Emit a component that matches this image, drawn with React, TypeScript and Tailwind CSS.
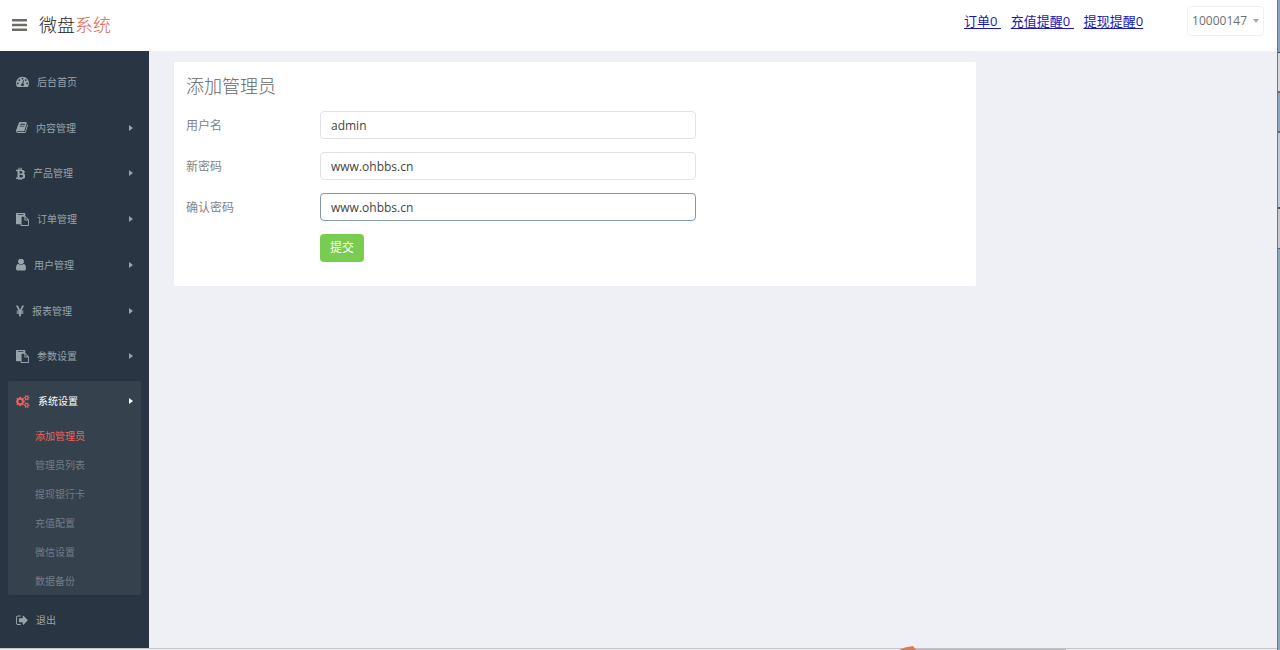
import { useState } from "react";

type Glyph = { d: string; box: string; className: string };

const glyphs: Record<string, Glyph> = {
  dashboard: {
    box: "0 0 1792 1792",
    className: "h-[13px] w-[13px]",
    d: "M384 1152q0-53-37.5-90.5t-90.5-37.5-90.5 37.5-37.5 90.5 37.5 90.5 90.5 37.5 90.5-37.5 37.5-90.5zm192-448q0-53-37.5-90.5t-90.5-37.5-90.5 37.5-37.5 90.5 37.5 90.5 90.5 37.5 90.5-37.5 37.5-90.5zm428 481l101-382q6-26-7.5-48.5t-38.5-29.5-48 6.5-30 39.5l-101 382q-60 5-107 43.5t-63 98.5q-20 77 20 146t117 89 146-20 89-117q16-60-6-117t-72-91zm660-33q0-53-37.5-90.5t-90.5-37.5-90.5 37.5-37.5 90.5 37.5 90.5 90.5 37.5 90.5-37.5 37.5-90.5zm-640-640q0-53-37.5-90.5t-90.5-37.5-90.5 37.5-37.5 90.5 37.5 90.5 90.5 37.5 90.5-37.5 37.5-90.5zm448 192q0-53-37.5-90.5t-90.5-37.5-90.5 37.5-37.5 90.5 37.5 90.5 90.5 37.5 90.5-37.5 37.5-90.5zm320 448q0 261-141 483-19 29-54 29h-1402q-35 0-54-29-141-221-141-483 0-182 71-348t191-286 286-191 348-71 348 71 286 191 191 286 71 348z",
  },
  book: {
    box: "60 0 1680 1792",
    className: "h-[13px] w-3",
    d: "M1703 478q40 57 18 129l-275 906q-19 64-76.5 107.5t-122.5 43.5h-923q-77 0-148.5-53.5t-99.5-131.5q-24-67-2-127 0-4 3-27t4-37q1-8-3-21.5t-3-19.5q2-11 8-21t16.5-23.5 16.5-23.5q23-38 45-91.5t30-91.5q3-10 .5-30t-.5-28q3-11 17-28t17-23q21-36 42-92t25-90q1-9-2.5-32t.5-28q4-13 22-30.5t22-22.5q19-26 42.5-84.5t27.5-96.5q1-8-3-25.5t-2-26.5q2-8 9-18t18-23 17-21q8-12 16.5-30.5t15-35 16-36 19.5-32 26.5-23.5 36-11.5 47.5 5.5l-1 3q38-9 51-9h761q74 0 114 56t18 130l-274 906q-36 119-71.5 153.5t-128.5 34.5h-869q-27 0-38 15-11 16-1 43 24 70 144 70h923q29 0 56-15.5t35-41.5l300-987q7-22 5-57 38 15 59 43zm-1064 2q-4 13 2 22.5t20 9.5h608q13 0 25.5-9.5t16.5-22.5l21-64q4-13-2-22.5t-20-9.5h-608q-13 0-25.5 9.5t-16.5 22.5zm-83 256q-4 13 2 22.5t20 9.5h608q13 0 25.5-9.5t16.5-22.5l21-64q4-13-2-22.5t-20-9.5h-608q-13 0-25.5 9.5t-16.5 22.5z",
  },
  bitcoin: {
    box: "120 64 1130 1600",
    className: "h-[13px] w-[9px]",
    d: "M1217 651q18 182-131 258 117 28 175 103t45 214q-7 71-32.5 125t-64.5 89-97 58.5-121.5 34.5-145.5 15v255h-154v-251q-80 0-122-1v252h-154v-255q-18 0-54-.5t-55-.5h-200l31-183h111q50 0 58-51v-402h16q-6-1-16-1v-287q-13-68-89-68h-111v-164l212 1q64 0 97-1v-252h154v247q82-2 122-2v-245h154v252q79 7 140 22.5t113 45 82.5 78 36.5 114.5zm-215 545q0-36-15-64t-37-46-57.5-30.5-65.5-18.5-74-9-69-3-64.5 1-47.5 1v338q8 0 37 .5t48 .5 53-1.5 58.5-4 57-8.5 55.5-14 47.5-21 39.5-30 24.5-40 9.5-51zm-71-476q0-33-12.5-58.5t-30.5-42-48-28-55-16.5-61.5-8-58-2.5-54 1-39.5.5v307q5 0 34.5.5t46.5 0 50-2 55-5.5 51.5-11 48.5-18.5 37-27 27-38.5 9-51z",
  },
  paste: {
    box: "0 0 1792 1792",
    className: "h-[13px] w-[13px]",
    d: "M768 1664h896v-640h-416q-40 0-68-28t-28-68v-416h-384v1152zm256-1440v-64q0-13-9.5-22.5t-22.5-9.5h-704q-13 0-22.5 9.5t-9.5 22.5v64q0 13 9.5 22.5t22.5 9.5h704q13 0 22.5-9.5t9.5-22.5zm256 672h299l-299-299v299zm512 128v672q0 40-28 68t-68 28h-960q-40 0-68-28t-28-68v-160h-544q-40 0-68-28t-28-68v-1344q0-40 28-68t68-28h1088q40 0 68 28t28 68v328q21 13 36 28l408 408q28 28 48 76t20 88z",
  },
  user: {
    box: "256 192 1280 1536",
    className: "h-3 w-2.5",
    d: "M1536 1399q0 109-62.5 187t-150.5 78h-854q-88 0-150.5-78t-62.5-187q0-85 8.5-160.5t31.5-152 58.5-131 94-89 134.5-34.5q131 128 313 128t313-128q76 0 134.5 34.5t94 89 58.5 131 31.5 152 8.5 160.5zm-256-887q0 159-112.5 271.5t-271.5 112.5-271.5-112.5-112.5-271.5 112.5-271.5 271.5-112.5 271.5 112.5 112.5 271.5z",
  },
  yen: {
    box: "376 64 1040 1536",
    className: "h-3 w-2",
    d: "M985.500 1536h-172q-13 0-22.500-9t-9.500-23v-330h-288q-13 0-22.500-9t-9.500-23v-103q0-13 9.500-22.500t22.500-9.500h288v-85h-288q-13 0-22.500-9t-9.500-23v-104q0-13 9.500-22.500t22.500-9.500h214l-321-578q-8-16 0-32 10-16 28-16h194q19 0 29 18l215 425q19 38 56 125 10-24 30.500-68t27.500-61l191-420q8-19 29-19h191q17 0 27 16 9 14 1 31l-313 579h215q13 0 22.500 9.500t9.500 22.500v104q0 14-9.500 23t-22.500 9h-290v85h290q13 0 22.500 9.500t9.500 22.500v103q0 14-9.500 23t-22.500 9h-290v330q0 13-9.500 22.500t-22.500 9.500z",
  },
  cogs: {
    box: "0 0 1920 1792",
    className: "h-[13px] w-3.5",
    d: "M832 896q0-106-75-181t-181-75-181 75-75 181 75 181 181 75 181-75 75-181zm768 512q0-52-38-90t-90-38-90 38-38 90q0 53 37.5 90.5t90.5 37.5 90.5-37.5 37.5-90.5zm0-1024q0-52-38-90t-90-38-90 38-38 90q0 53 37.5 90.5t90.5 37.5 90.5-37.5 37.5-90.5zm-384 421v185q0 10-7 19.5t-16 10.5l-155 24q-11 35-32 76 34 48 90 115 7 11 7 20 0 12-7 19-23 30-82.5 89.5t-78.5 59.5q-11 0-21-7l-115-90q-37 19-77 31-11 108-23 155-7 24-30 24h-186q-11 0-20-7.5t-10-17.5l-23-153q-34-10-75-31l-118 89q-7 7-20 7-11 0-21-8-144-133-144-160 0-9 7-19 10-14 41-53t47-61q-23-44-35-82l-152-24q-10-1-17-9.5t-7-19.5v-185q0-10 7-19.5t16-10.5l155-24q11-35 32-76-34-48-90-115-7-11-7-20 0-12 7-20 22-30 82-89t79-59q11 0 21 7l115 90q34-18 77-32 11-108 23-154 7-24 30-24h186q11 0 20 7.5t10 17.5l23 153q34 10 75 31l118-89q8-7 20-7 11 0 21 8 144 133 144 160 0 8-7 19-12 16-42 54t-45 60q23 48 34 82l152 23q10 2 17 10.5t7 19.5zm640 533v140q0 16-149 31-12 27-30 52 51 113 51 138 0 4-4 7-122 71-124 71-8 0-46-47t-52-68q-20 2-30 2t-30-2q-14 21-52 68t-46 47q-2 0-124-71-4-3-4-7 0-25 51-138-18-25-30-52-149-15-149-31v-140q0-16 149-31 13-29 30-52-51-113-51-138 0-4 4-7 4-2 35-20t59-34 30-16q8 0 46 46.5t52 67.5q20-2 30-2t30 2q51-71 92-112l6-2q4 0 124 70 4 3 4 7 0 25-51 138 17 23 30 52 149 15 149 31zm0-1024v140q0 16-149 31-12 27-30 52 51 113 51 138 0 4-4 7-122 71-124 71-8 0-46-47t-52-68q-20 2-30 2t-30-2q-14 21-52 68t-46 47q-2 0-124-71-4-3-4-7 0-25 51-138-18-25-30-52-149-15-149-31v-140q0-16 149-31 13-29 30-52-51-113-51-138 0-4 4-7 4-2 35-20t59-34 30-16q8 0 46 46.5t52 67.5q20-2 30-2t30 2q51-71 92-112l6-2q4 0 124 70 4 3 4 7 0 25-51 138 17 23 30 52 149 15 149 31z",
  },
  signOut: {
    box: "64 64 1600 1600",
    className: "h-3 w-3",
    d: "M704 1440q0 4 1 20t.5 26.5-3 23.5-10 19.5-20.5 6.5h-320q-119 0-203.5-84.5t-84.5-203.5v-704q0-119 84.5-203.5t203.5-84.5h320q13 0 22.5 9.5t9.5 22.5q0 4 1 20t.5 26.5-3 23.5-10 19.5-20.5 6.5h-320q-66 0-113 47t-47 113v704q0 66 47 113t113 47h312l11.5 1 11.5 3 8 5.5 7 9 2 13.5zm928-544q0 26-19 45l-544 544q-19 19-45 19t-45-19-19-45v-288h-448q-26 0-45-19t-19-45v-384q0-26 19-45t45-19h448v-288q0-26 19-45t45-19 45 19l544 544q19 19 19 45z",
  },
};

function Icon({ name }: { name: string }) {
  const glyph = glyphs[name];
  return (
    <svg viewBox={glyph.box} className={`shrink-0 ${glyph.className}`} fill="currentColor" aria-hidden="true">
      <path d={glyph.d} />
    </svg>
  );
}

function CaretRight() {
  return (
    <svg viewBox="0 0 4 6" className="ml-auto h-1.5 w-1 shrink-0" fill="currentColor" aria-hidden="true">
      <path d="M0 0l4 3-4 3z" />
    </svg>
  );
}

const menu = [
  { icon: "dashboard", label: "后台首页", expands: false },
  { icon: "book", label: "内容管理", expands: true },
  { icon: "bitcoin", label: "产品管理", expands: true },
  { icon: "paste", label: "订单管理", expands: true },
  { icon: "user", label: "用户管理", expands: true },
  { icon: "yen", label: "报表管理", expands: true },
  { icon: "paste", label: "参数设置", expands: true },
];

const submenu = ["添加管理员", "管理员列表", "提现银行卡", "充值配置", "微信设置", "数据备份"];

function MenuItem({ icon, label, expands }: { icon: string; label: string; expands: boolean }) {
  return (
    <li className="flex flex-1">
      <a href="#" className="flex flex-1 items-center gap-2 px-2 text-[#99a3ab]">
        <Icon name={icon} />
        <span>{label}</span>
        {expands && <CaretRight />}
      </a>
    </li>
  );
}

function Sidebar() {
  return (
    <nav className="flex w-[149px] shrink-0 flex-col bg-[#293542] px-2 pb-[5px] pt-2 text-[10px] leading-4">
      <ul className="flex flex-1 flex-col">
        {menu.map((item) => (
          <MenuItem key={item.label} {...item} />
        ))}
        <li className="my-0.5 rounded-xs bg-[#35414d]">
          <a href="#" className="flex h-10 items-center gap-2 px-2 text-white">
            <span className="flex text-[#f2615a]">
              <Icon name="cogs" />
            </span>
            <span>系统设置</span>
            <CaretRight />
          </a>
          <ul>
            {submenu.map((label, index) => (
              <li key={label}>
                <a
                  href="#"
                  className={`flex h-[29px] items-center pl-[27px] ${index === 0 ? "text-[#f2615a]" : "text-[#737d86]"}`}
                >
                  {label}
                </a>
              </li>
            ))}
          </ul>
        </li>
        <MenuItem icon="signOut" label="退出" expands={false} />
      </ul>
    </nav>
  );
}

function TopBar() {
  return (
    <header className="flex h-[51px] items-center bg-white pb-0.5 pl-3 pr-[13px]">
      <button type="button" aria-label="菜单" className="mr-3 text-[#6c6c66]">
        <svg viewBox="0 0 15 12" className="h-3 w-[15px]" fill="currentColor" aria-hidden="true">
          <rect width="15" height="2.600" rx="0.500" />
          <rect y="4.700" width="15" height="2.600" rx="0.500" />
          <rect y="9.400" width="15" height="2.600" rx="0.500" />
        </svg>
      </button>
      <a href="#" className="text-lg font-light text-[#222]">
        微盘<span className="text-[#dc6450]">系统</span>
      </a>
      <div className="ml-auto flex items-center self-start pt-1.5">
        <div className="mr-11 flex gap-2.5 text-[13px] leading-5 text-[#1a18b4] underline underline-offset-2">
          <a href="#">订单0&nbsp;</a>
          <a href="#">充值提醒0&nbsp;</a>
          <a href="#">提现提醒0</a>
        </div>
        <button
          type="button"
          className="flex h-[30px] items-center gap-1.5 rounded-sm border border-[#f0f0f2] px-1 text-xs text-[#6e6e6e]"
        >
          10000147
          <svg viewBox="0 0 6 4" className="h-1 w-1.5" fill="#aaa" aria-hidden="true">
            <path d="M0 0h6l-3 4z" />
          </svg>
        </button>
      </div>
    </header>
  );
}

const initialFields = [
  { id: "username", label: "用户名", value: "admin", active: false },
  { id: "password", label: "新密码", value: "www.ohbbs.cn", active: false },
  { id: "confirm", label: "确认密码", value: "www.ohbbs.cn", active: true },
];

function AdminForm() {
  const [fields, setFields] = useState(initialFields);
  const update = (id: string, value: string) =>
    setFields(fields.map((field) => (field.id === id ? { ...field, value } : field)));

  return (
    <section className="w-full max-w-[802px] rounded-xs bg-white px-3 pb-6 pt-2.5">
      <h1 className="text-lg font-light leading-7 text-[#666]">添加管理员</h1>
      <form className="mt-[11px] flex flex-col gap-[13px]" onSubmit={(event) => event.preventDefault()}>
        {fields.map((field) => (
          <div key={field.id} className="flex items-center">
            <label htmlFor={field.id} className="w-[134px] shrink-0 pt-0.5 text-xs text-[#838383]">
              {field.label}
            </label>
            <input
              id={field.id}
              type="text"
              value={field.value}
              onChange={(event) => update(field.id, event.target.value)}
              className={`h-7 w-full max-w-[376px] rounded-sm border bg-white px-2.5 text-xs text-[#444] outline-none ${
                field.active ? "border-[#8299a8]" : "border-[#e2e2e4]"
              }`}
            />
          </div>
        ))}
        <div className="pl-[134px]">
          <button type="submit" className="block h-7 rounded-sm bg-[#78cd51] px-2.5 text-xs text-white">
            提交
          </button>
        </div>
      </form>
    </section>
  );
}

function WindowEdge() {
  return (
    <div className="flex w-[3px] shrink-0 flex-col border-l border-[#5f7d92] bg-[#8fa8b8]" aria-hidden="true">
      <div className="h-[53px] border-b border-[#444] bg-[#86a5c4]" />
      <div className="h-10 border-b-2 border-[#667] bg-[#d5d9de]" />
      <div className="h-10 border-b-2 border-[#667] bg-[#8ea6c2]" />
      <div className="h-[76px] border-b-2 border-[#555] bg-[#bccbd6]" />
      <div className="h-10 border-b border-[#567] bg-[#c3c8cd]" />
    </div>
  );
}

function BottomEdge() {
  return (
    <div className="relative flex h-0.5 border-t border-[#c3c4ca] bg-[#f2f2f4]" aria-hidden="true">
      <div className="w-[71%]" />
      <div className="w-[12.5%] bg-[#b4b4b8]" />
      <svg viewBox="0 0 18 4" className="absolute bottom-0 left-[70.3%] h-1 w-[18px]" fill="#dd7a52">
        <path d="M1 4q5-3 14-4l3 4z" />
      </svg>
    </div>
  );
}

export default function App() {
  return (
    <div className="flex min-h-screen font-['Open_Sans','Noto_Sans_CJK_SC',sans-serif]">
      <div className="flex min-w-0 flex-1 flex-col">
        <TopBar />
        <div className="flex flex-1 bg-[#eff0f6]">
          <Sidebar />
          <main className="min-w-0 flex-1 px-[25px] py-[11px]">
            <AdminForm />
          </main>
        </div>
        <BottomEdge />
      </div>
      <WindowEdge />
    </div>
  );
}
